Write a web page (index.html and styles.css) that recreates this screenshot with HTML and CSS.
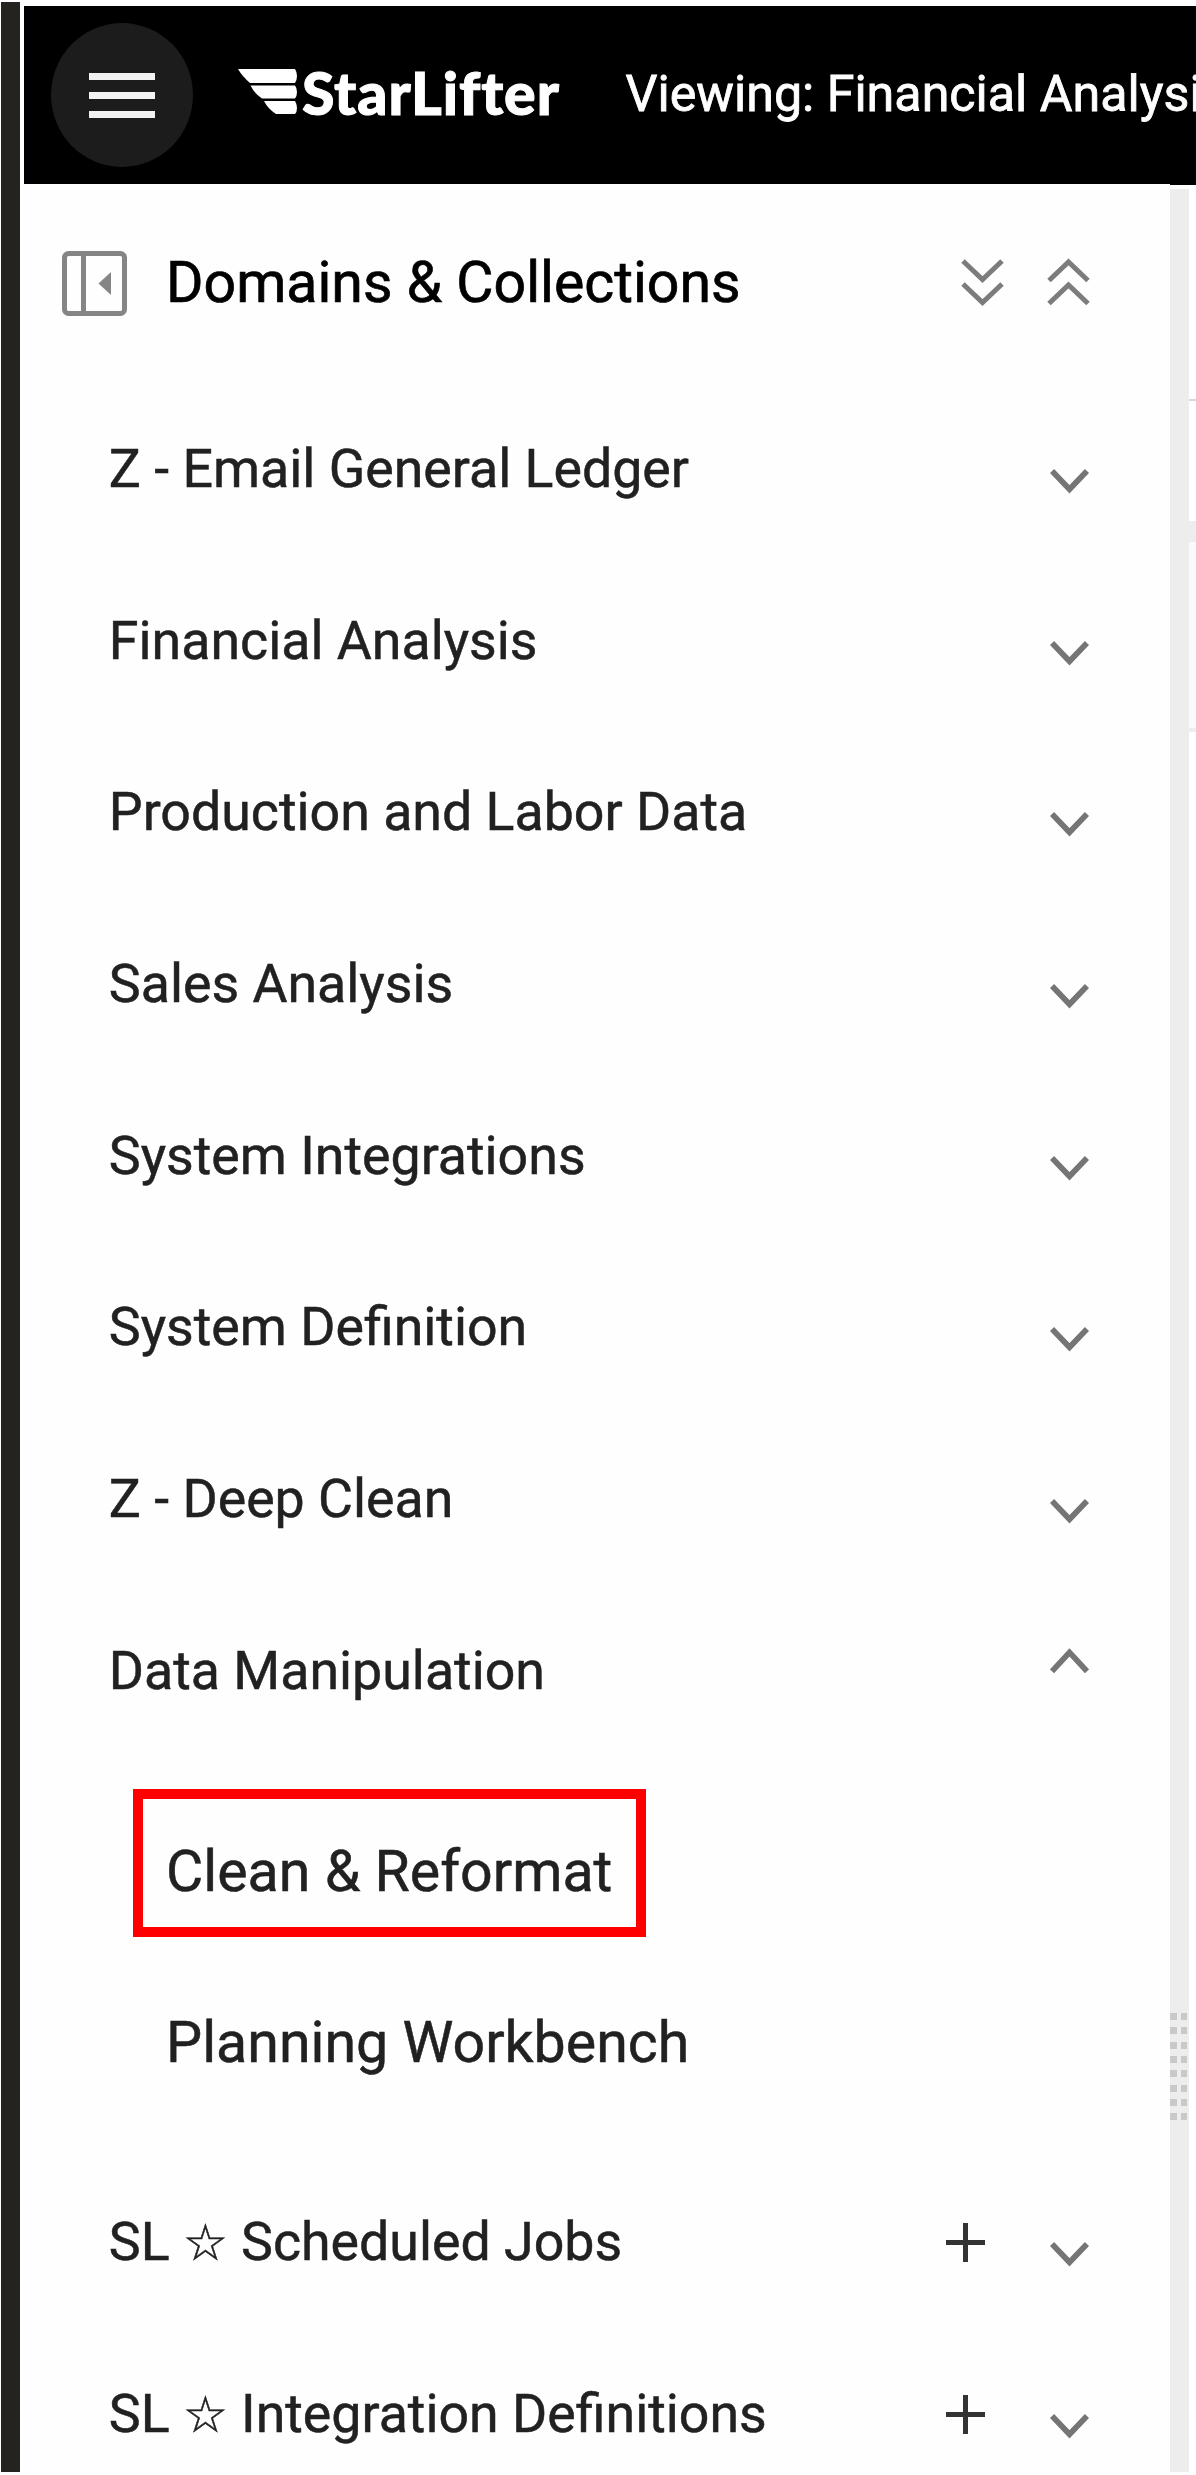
FILE: index.html
```
<!DOCTYPE html>
<html lang="en">
<head>
<meta charset="utf-8">
<title>StarLifter</title>
<link rel="stylesheet" href="styles.css">
</head>
<body>
<svg class="defs" width="0" height="0">
  <symbol id="down" viewBox="0 0 39 60"><path d="M2 32 19.5 50.2 37 32"/></symbol>
  <symbol id="up" viewBox="0 0 39 60"><path d="M2 30.3 19.5 11.4 37 30.3"/></symbol>
  <symbol id="plus" viewBox="0 0 39 39"><path d="M0 19.5H39M19.5 0V39"/></symbol>
</svg>
<div class="page">
  <div class="edge"></div>
  <div class="app">
    <header class="topbar">
      <button class="menu" aria-label="Menu"><span></span><span></span><span></span></button>
      <svg class="wing" viewBox="0 0 59 45"><path d="M0 0H57Q59 3 59 7T57 14H12Q4 7 0 0ZM12.500 16.500H57Q59 19 59 23T57 29.500H24Q16 24 12.500 16.500ZM26 32H57Q59 35 59 39T57 45H38Q30 40 26 32Z"/></svg>
      <span class="brand">StarLifter</span>
      <span class="viewing">Viewing: Financial Analysis</span>
    </header>
    <div class="body">
      <nav class="sidebar">
        <div class="head">
          <svg class="panel" viewBox="0 0 65 65"><rect x="2.5" y="2.5" width="60" height="60" rx="4"/><path d="M21.5 2.5V62.5"/><path class="tri" d="M49 21V44L36.5 32.5Z"/></svg>
          <h1>Domains &amp; Collections</h1>
          <svg class="double" viewBox="0 0 43 50"><path d="M2 3 21.5 21.5 41 3M2 26 21.5 44.5 41 26"/></svg>
          <svg class="double" viewBox="0 0 43 50"><path d="M2 22.5 21.5 4 41 22.5M2 45.5 21.5 27 41 45.5"/></svg>
        </div>
        <div class="row"><span>Z - Email General Ledger</span><svg class="chev"><use href="#down"/></svg></div>
        <div class="row"><span>Financial Analysis</span><svg class="chev"><use href="#down"/></svg></div>
        <div class="row"><span>Production and Labor Data</span><svg class="chev"><use href="#down"/></svg></div>
        <div class="row"><span>Sales Analysis</span><svg class="chev"><use href="#down"/></svg></div>
        <div class="row"><span>System Integrations</span><svg class="chev"><use href="#down"/></svg></div>
        <div class="row"><span>System Definition</span><svg class="chev"><use href="#down"/></svg></div>
        <div class="row"><span>Z - Deep Clean</span><svg class="chev"><use href="#down"/></svg></div>
        <div class="row"><span>Data Manipulation</span><svg class="chev"><use href="#up"/></svg></div>
        <div class="children">
          <div class="child marked">Clean &amp; Reformat</div>
          <div class="child">Planning Workbench</div>
        </div>
        <div class="row"><span>SL <i class="star">☆</i> Scheduled Jobs</span><svg class="plus"><use href="#plus"/></svg><svg class="chev"><use href="#down"/></svg></div>
        <div class="row"><span>SL <i class="star">☆</i> Integration Definitions</span><svg class="plus"><use href="#plus"/></svg><svg class="chev"><use href="#down"/></svg></div>
      </nav>
      <div class="splitter"><div class="grip"></div></div>
      <main class="content">
        <div class="toolbar"></div>
        <div class="filters"></div>
        <div class="band"></div>
        <div class="summary"></div>
      </main>
    </div>
  </div>
</div>
</body>
</html>
```
FILE: styles.css
```
*, *::after { box-sizing: border-box; }

body {
  margin: 0;
  background: #fff;
  font-family: Roboto, "Liberation Sans", sans-serif;
  color: #212121;
  -webkit-text-stroke: 0.5px;
  overflow: hidden;
}

.defs { position: absolute; }

.page {
  display: flex;
  height: 2475px;
  padding: 2px 0 3px 1px;
  overflow: hidden;
}

.edge { flex: none; width: 19px; background: #242320; }

.app {
  flex: 1;
  min-width: 0;
  display: flex;
  flex-direction: column;
  padding-top: 4px;
}

.topbar {
  flex: none;
  display: flex;
  align-items: center;
  height: 178.5px;
  margin-left: 4.4px;
  padding-left: 26.6px;
  background: #000;
  color: #fff;
  white-space: nowrap;
  overflow: hidden;
}

.menu {
  flex: none;
  display: flex;
  flex-direction: column;
  align-items: center;
  justify-content: center;
  gap: 12px;
  width: 142px;
  height: 144px;
  padding: 0;
  border: 0;
  border-radius: 50%;
  background: #1c1c1c;
}

.menu span { width: 66px; height: 7px; background: #f2f2f2; }

.wing {
  flex: none;
  width: 59px;
  height: 45px;
  margin: -7px 0 0 45px;
  fill: #fff;
}

.brand {
  flex: none;
  width: 324px;
  padding: 0 0 0 5px;
  margin: -5px 4.5px 0 0;
  font: 900 59px/70px Lato, sans-serif;
  letter-spacing: 0.9px;
  -webkit-text-stroke: 1px;
}

.viewing {
  flex: none;
  font-size: 50.2px;
  line-height: 60px;
  margin-top: -2px;
  -webkit-text-stroke: 0.8px;
}

.body {
  flex: 1;
  min-height: 0;
  margin-top: -0.5px;
  display: flex;
}

.sidebar {
  flex: none;
  width: 1149.5px;
  background: #fefefe;
  overflow: hidden;
}

.head {
  display: flex;
  align-items: center;
  height: 199px;
  padding: 0 80px 1px 42px;
}

.head h1 {
  flex: 1;
  margin: 0;
  font-size: 57.2px;
  font-weight: 400;
  line-height: 68px;
  color: #000;
  -webkit-text-stroke: 0.7px;
}

.panel {
  width: 65px;
  height: 65px;
  margin-right: 39px;
  fill: none;
  stroke: #858585;
  stroke-width: 5;
}

.panel .tri { fill: #858585; stroke: none; }

.double {
  width: 43px;
  height: 50px;
  margin-left: 42.5px;
  fill: none;
  stroke: #7c7c7c;
  stroke-width: 5;
}

.row {
  display: flex;
  align-items: center;
  height: 171.7px;
  padding: 0 80.8px 0 88.8px;
  font-size: 53.7px;
  line-height: 64px;
}

.row span { flex: 1; }

.star {
  font: normal 50px/1 "DejaVu Sans", sans-serif;
}

.chev {
  width: 39px;
  height: 60px;
  fill: none;
  stroke: #757575;
  stroke-width: 5.8;
}

.plus {
  width: 39px;
  height: 39px;
  margin-right: 65px;
  stroke: #333;
  stroke-width: 5;
}

.children { padding: 29.5px 0 28px; }

.child {
  position: relative;
  padding-left: 146px;
  font-size: 57.3px;
  line-height: 171.3px;
}

/* Highlight frame laid over the selected entry */
.marked::after {
  content: "";
  position: absolute;
  left: 113px;
  top: 3px;
  width: 513px;
  height: 148px;
  border: 10px solid #f00;
}

.splitter {
  flex: none;
  width: 19.5px;
  margin-top: 5px;
  padding-top: 1824px;
  background: #ededed;
}

.grip {
  width: 17.6px;
  height: 108px;
  background: repeating-linear-gradient(to bottom, transparent 0 7px, #ededed 7px 14.35px),
    linear-gradient(to right, #c9c9c9 0 7px, #ededed 7px 10.6px, #c9c9c9 10.6px);
}

.content { flex: 1; }
.toolbar { height: 217px; border-bottom: 2px solid #d8d8d8; }
.filters { height: 120px; }
.band { height: 21px; background: #ededed; }
.summary { height: 190px; background: #fafafa; border-bottom: 4px solid #ededed; }
```
